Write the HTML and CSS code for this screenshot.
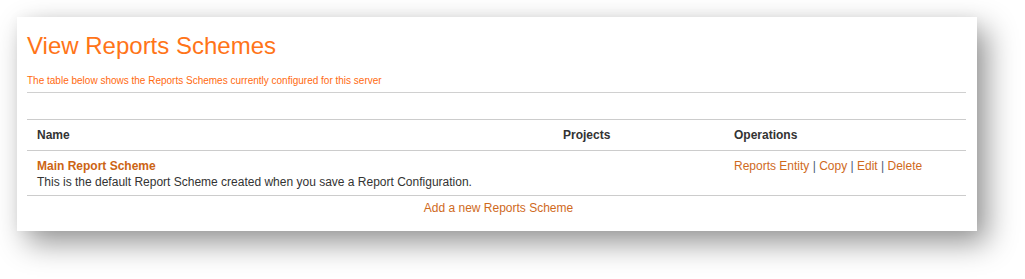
FILE: index.html
```html
<!DOCTYPE html>
<html lang="en">
<head>
    <meta charset="UTF-8">
    <title>View Reports Schemes</title>
    <link rel="stylesheet" href="styles.css">
</head>
<body>

    <div class="card">
        <h1 class="title">View Reports Schemes</h1>
        <p class="intro">The table below shows the Reports Schemes currently configured for this server</p>
        <hr class="divider">

        <table class="schemes">
            <thead>
                <tr>
                    <th class="col-name">Name</th>
                    <th class="col-projects">Projects</th>
                    <th class="col-ops">Operations</th>
                </tr>
            </thead>
            <tbody>
                <tr>
                    <td>
                        <a href="#" class="scheme-name">Main Report Scheme</a>
                        <div class="scheme-desc">This is the default Report Scheme created when you save a Report Configuration.</div>
                    </td>
                    <td></td>
                    <td>
                        <a href="#">Reports Entity</a> <span class="sep">|</span>
                        <a href="#">Copy</a> <span class="sep">|</span>
                        <a href="#">Edit</a> <span class="sep">|</span>
                        <a href="#">Delete</a>
                    </td>
                </tr>
            </tbody>
            <tfoot>
                <tr>
                    <td colspan="3" class="add-cell"><a href="#">Add a new Reports Scheme</a></td>
                </tr>
            </tfoot>
        </table>
    </div>

</body>
</html>
```

FILE: styles.css
```css
/* Basic Styles */
html {
    background-color: #ffffff;
}

body {
    font-family: Arial, "Liberation Sans", sans-serif;
    margin: 0;
    padding: 17px 17px 48px;
    background-color: #ffffff;
    color: #333333;
}

a {
    color: #cf6a1d;
    text-decoration: none;
}

.card {
    width: 939px;
    padding: 15px 11px 15px 10px;
    background-color: #ffffff;
    box-shadow: 10px 12px 28px rgba(0, 0, 0, 0.42), 0 0 12px rgba(0, 0, 0, 0.04);
}

.title {
    margin: 0;
    font-size: 24px;
    line-height: 28px;
    font-weight: normal;
    color: #ff7418;
}

.intro {
    margin: 15px 0 0;
    font-size: 10px;
    line-height: 12px;
    color: #ff6a10;
}

.divider {
    margin: 5px 0 0;
    border: none;
    border-top: 1px solid #d0d0d0;
    height: 0;
}

/* Schemes table */
.schemes {
    width: 100%;
    margin-top: 26px;
    border-collapse: collapse;
    font-size: 12px;
    line-height: 16px;
}

.schemes th {
    padding: 7px 10px;
    text-align: left;
    font-weight: bold;
    color: #333333;
    border-top: 1px solid #cccccc;
    border-bottom: 1px solid #cccccc;
}

.schemes td {
    padding: 7px 10px 5px;
    vertical-align: top;
    border-bottom: 1px solid #cccccc;
}

.col-name {
    width: 506px;
}

.col-projects {
    width: 151px;
}

.scheme-name {
    font-weight: bold;
    color: #cc6414;
}

.sep {
    color: #4a5a7a;
}

.schemes .add-cell {
    padding: 4px 8px 0 12px;
    text-align: center;
    border-bottom: none;
}
```
